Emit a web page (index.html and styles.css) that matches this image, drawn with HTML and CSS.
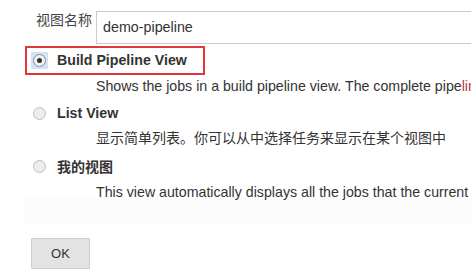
FILE: index.html
```html
<!DOCTYPE html>
<html>
<head>
<meta charset="utf-8">
<link rel="stylesheet" href="styles.css">
</head>
<body>
<div class="page">
  <div class="name-row">
    <label class="name-label">视图名称</label>
    <div class="name-input">demo-pipeline</div>
  </div>
  <div class="options">
    <div class="opt">
      <div class="opt-head highlight">
        <span class="radio-wrap focused"><span class="radio checked"><span class="dot"></span></span></span>
        <span class="opt-title">Build Pipeline View</span>
      </div>
      <div class="opt-desc">Shows the jobs in a build pipeline view. The complete pipe<span class="red">line</span> view</div>
    </div>
    <div class="opt">
      <div class="opt-head">
        <span class="radio-wrap"><span class="radio"></span></span>
        <span class="opt-title">List View</span>
      </div>
      <div class="opt-desc cjk">显示简单列表。你可以从中选择任务来显示在某个视图中</div>
    </div>
    <div class="opt last">
      <div class="opt-head">
        <span class="radio-wrap"><span class="radio"></span></span>
        <span class="opt-title cjk">我的视图</span>
      </div>
      <div class="opt-desc">This view automatically displays all the jobs that the current user</div>
    </div>
  </div>
  <div class="band"></div>
  <div class="actions">
    <button class="ok-btn">OK</button>
  </div>
</div>
</body>
</html>
```
FILE: styles.css
```css
html, body {
  margin: 0;
  padding: 0;
  background: #ffffff;
}
body {
  font-family: "Liberation Sans", Arial, "Noto Sans CJK SC", sans-serif;
  color: #333333;
  overflow: hidden;
  width: 471px;
  height: 275px;
}
.page {
  width: 471px;
  overflow: hidden;
}
.name-row {
  display: flex;
  align-items: flex-start;
  padding-top: 11px;
  padding-left: 36px;
  white-space: nowrap;
}
.name-label {
  flex: none;
  font-family: "Noto Sans CJK SC", sans-serif;
  font-size: 14px;
  line-height: 17px;
  color: #444444;
  width: 60px;
}
.name-input {
  box-sizing: border-box;
  height: 33px;
  width: 380px;
  flex: none;
  border: 1px solid #cccccc;
  border-right: none;
  padding-left: 6px;
  font-size: 14.3px;
  line-height: 31px;
  color: #333333;
}
.options {
  padding-left: 25px;
  padding-top: 2px;
  white-space: nowrap;
}
.opt-head {
  display: inline-flex;
  align-items: center;
  box-sizing: border-box;
  height: 29px;
  border: 2px solid transparent;
  padding-left: 4px;
  padding-right: 16px;
}
.opt-head.highlight {
  border-color: #e0373c;
}
.radio-wrap {
  width: 17px;
  height: 17px;
  margin-right: 9px;
  display: inline-flex;
  align-items: center;
  justify-content: center;
  flex: none;
}
.radio-wrap.focused {
  background: #d3e2f6;
}
.radio {
  box-sizing: border-box;
  width: 13px;
  height: 13px;
  border-radius: 50%;
  border: 1px solid #bcbcbc;
  background: #ededed;
  display: inline-flex;
  align-items: center;
  justify-content: center;
}
.radio.checked {
  border-color: #8d8d8d;
  background: #f2f2f2;
}
.dot {
  width: 5px;
  height: 5px;
  border-radius: 50%;
  background: #333333;
}
.opt-title {
  font-weight: bold;
  font-size: 14.2px;
  line-height: 17px;
}
.opt-title.cjk {
  font-family: "Noto Sans CJK SC", sans-serif;
  font-size: 14px;
}
.opt-desc {
  padding-left: 71px;
  font-size: 14.2px;
  line-height: 17px;
  margin-top: 3px;
  margin-bottom: 4px;
}
.opt-desc.cjk {
  font-family: "Noto Sans CJK SC", sans-serif;
  font-size: 14px;
  margin-top: 1px;
  margin-bottom: 6px;
}
.opt.last .opt-desc {
  margin-bottom: 0;
}
.red {
  color: #b23a3a;
}
.band {
  margin-top: -4px;
  margin-left: 25px;
  height: 27px;
  background: #fcfcfc;
}
.actions {
  padding-left: 31px;
  padding-top: 14px;
}
.ok-btn {
  box-sizing: border-box;
  width: 59px;
  height: 31px;
  background: #e3e3e3;
  border: 1px solid #cdcdcd;
  border-radius: 1px;
  font-family: "Liberation Sans", Arial, sans-serif;
  font-size: 13px;
  color: #333333;
  padding: 0;
}
```
